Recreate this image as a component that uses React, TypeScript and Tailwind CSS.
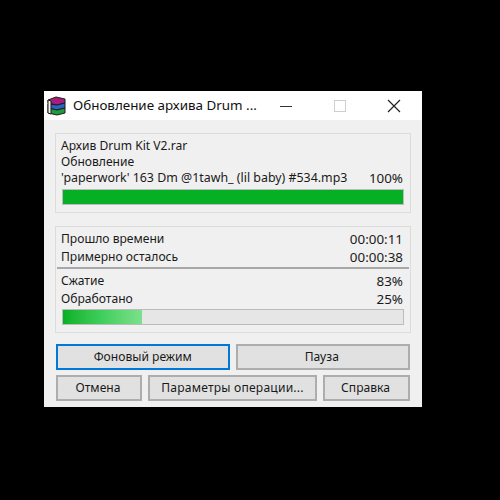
const Bar = ({ value }: { value: 'full' | 'part' }) => (
  <div className="h-[16px] border border-[#bcbcbc] bg-[#e6e6e6]">
    {value === 'full' ? (
      <div className="h-full w-full bg-[#06b025]" />
    ) : (
      <div className="h-full w-[79px] bg-gradient-to-r from-[#06b025] via-[#3fcf5c] to-[#7be08c]" />
    )}
  </div>
);

const Row = ({ left, right, leftClass = '' }: { left: string; right: string; leftClass?: string }) => (
  <div className="flex h-[18px] items-center justify-between leading-[18px]">
    <span className={leftClass}>{left}</span>
    <span className="pr-[1px] text-[13.4px]">{right}</span>
  </div>
);

const Btn = ({ label, className }: { label: string; className: string }) => (
  <button className={`flex h-[26px] items-center justify-center border-2 bg-[#e1e1e1] ${className}`}>{label}</button>
);

const RarIcon = () => (
  <svg width="20" height="20" viewBox="0 0 20 20">
    <path d="M1 4 L9 1 L18 3 L18 7 L10 9 L1 7 Z" fill="#a81c7e" stroke="#1c1c1c" strokeWidth="1" />
    <path d="M1 8 L10 9 L18 7 L18 12 L10 14 L1 12 Z" fill="#2a62c8" stroke="#1c1c1c" strokeWidth="1" />
    <path d="M1 12 L10 14 L18 12 L18 17 L10 19 L1 17 Z" fill="#1f9a3c" stroke="#1c1c1c" strokeWidth="1" />
    <path d="M1 4 L1 17 L4 18 L4 5 Z" fill="#f2f2f2" stroke="#1c1c1c" strokeWidth="1" />
  </svg>
);

export default function App() {
  return (
    <div className="h-[500px] w-[500px] bg-black pl-[44px] pt-[91px] font-['Noto_Sans',sans-serif] text-[12.1px] text-[#1a1a1a]">
      <div className="flex h-[316px] w-[378px] flex-col bg-[#f0f0f0]">
        <div className="flex h-[29px] shrink-0 items-center bg-white pl-[3px]">
          <RarIcon />
          <span className="ml-[6px] w-[200px] whitespace-nowrap text-[13.4px] text-[#111]">Обновление архива Drum ...</span>
          <svg width="14" height="14" viewBox="0 0 14 14" className="ml-[6px]">
            <path d="M1 7.5 H13" stroke="#333" strokeWidth="1" />
          </svg>
          <svg width="12" height="12" viewBox="0 0 12 12" className="ml-[41px]">
            <rect x="0.5" y="0.5" width="11" height="11" fill="none" stroke="#cfcfcf" />
          </svg>
          <svg width="14" height="14" viewBox="0 0 14 14" className="ml-[41px]">
            <path d="M1 1 L13 13 M13 1 L1 13" stroke="#222" strokeWidth="1.2" />
          </svg>
        </div>

        <div className="mx-[11px] mt-[13px] h-[80px] border border-[#dcdcdc] pl-[5px] pr-[6px] pt-[3px]">
          <div className="h-[16px] leading-[18px]">Архив Drum Kit V2.rar</div>
          <div className="h-[16px] leading-[18px]">Обновление</div>
          <div className="h-[18px]">
            <Row left="'paperwork' 163 Dm @1tawh_ (lil baby) #534.mp3" right="100%" leftClass="text-[12.4px]" />
          </div>
          <div className="ml-[1px] mt-[2px]">
            <Bar value="full" />
          </div>
        </div>

        <div className="mx-[11px] mt-[13px] h-[107px] border border-[#dcdcdc] pt-[3px]">
          <div className="pl-[5px] pr-[6px]">
            <Row left="Прошло времени" right="00:00:11" />
            <Row left="Примерно осталось" right="00:00:38" />
          </div>
          <div className="mx-[1px] mt-[1px] h-[2px] bg-[#a8a8a8]" />
          <div className="mt-[3px] pl-[5px] pr-[6px]">
            <Row left="Сжатие" right="83%" />
            <Row left="Обработано" right="25%" />
            <div className="ml-[1px] mt-[1px]">
              <Bar value="part" />
            </div>
          </div>
        </div>

        <div className="mx-[12px] mt-[11px] flex gap-[6px]">
          <Btn label="Фоновый режим" className="w-[174px] border-[#0078d7]" />
          <Btn label="Пауза" className="w-[175px] border-[#adadad] pr-[2px]" />
        </div>
        <div className="mx-[12px] mt-[5px] flex gap-[6px]">
          <Btn label="Отмена" className="w-[86px] border-[#adadad] pr-[2px]" />
          <Btn label="Параметры операции..." className="w-[169px] border-[#adadad] tracking-[0.2px]" />
          <Btn label="Справка" className="w-[87px] border-[#adadad] pr-[2px]" />
        </div>
      </div>
    </div>
  );
}
